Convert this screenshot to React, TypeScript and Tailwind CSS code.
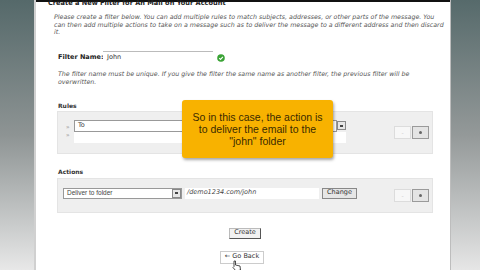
import React from "react";

const SmallButtons = () => (
  <div className="flex gap-[1px]">
    <div className="w-[17px] h-[13px] border border-[#dcdcdc] bg-[#f7f7f7] flex items-center justify-center text-[6px] text-[#ccc]">
      -
    </div>
    <div className="w-[17px] h-[13px] border border-[#9a9a9a] bg-[#e4e4e4] flex items-center justify-center">
      <span className="w-[3px] h-[3px] bg-[#666] rounded-full" />
    </div>
  </div>
);

const DropBtn = () => (
  <div className="w-[9px] h-[9px] border border-[#888] bg-[#e6e6e6] flex items-center justify-center">
    <span className="w-[3px] h-[2px] bg-[#444]" />
  </div>
);

export default function App() {
  return (
    <div
      className="w-[480px] h-[270px] overflow-hidden flex bg-white text-[#333]"
      style={{ fontFamily: "'DejaVu Sans', Verdana, sans-serif" }}
    >
      {/* left sidebar */}
      <div className="w-[34px] h-full bg-gradient-to-b from-[#55696a] via-[#8e9494] to-[#e8e8e8]" />
      <div className="w-[2px] h-full bg-[#d0d0d0]" />

      {/* content */}
      <div className="relative flex-1 h-full flex flex-col">
        <div className="h-[2px] bg-[#111]" />
        <div className="-mt-[3px] pl-[12px] text-[6.6px] font-bold text-[#222] leading-[9px] whitespace-nowrap">
          Create a New Filter for An Mail on Your Account
        </div>
        <div className="mt-[5px] pl-[18px] pr-[4px] text-[6.3px] italic text-[#555] leading-[7.5px]">
          <p className="whitespace-nowrap">
            Please create a filter below. You can add multiple rules to match subjects, addresses, or other parts of the message. You
          </p>
          <p className="whitespace-nowrap">
            can then add multiple actions to take on a message such as to deliver the message to a different address and then discard
          </p>
          <p>it.</p>
        </div>

        {/* filter name */}
        <div className="mt-[15px] pl-[22px] flex items-center h-[14px]">
          <span className="text-[6.5px] font-bold text-[#222] w-[45px] whitespace-nowrap">Filter Name:</span>
          <div className="w-[110px] h-[14px] border-t border-[#bbb] bg-white flex items-center pl-[4px] text-[6.5px] text-[#333]">
            John
          </div>
          <svg width="8" height="8" viewBox="0 0 8 8" className="ml-[4px]">
            <circle cx="4" cy="4" r="3.8" fill="#3aa335" />
            <path d="M2.2 4.1 L3.5 5.4 L5.9 2.8" stroke="#fff" strokeWidth="1.1" fill="none" />
          </svg>
        </div>
        <div className="mt-[5px] pl-[22px] text-[6.3px] italic text-[#555] leading-[8px]">
          <p className="whitespace-nowrap">
            The filter name must be unique. If you give the filter the same name as another filter, the previous filter will be
          </p>
          <p>overwritten.</p>
        </div>

        {/* rules */}
        <div className="mt-[16px] pl-[22px] text-[6px] font-bold text-[#333] leading-[8px]">Rules</div>
        <div className="ml-[21px] mr-[17px] mt-[1px] h-[43px] bg-[#efefef] border border-[#e4e4e4] flex items-start pt-[8px] pl-[8px] pr-[3px]">
          <div className="flex flex-col text-[6px] text-[#888] leading-[8px] pt-[3px] w-[8px]">
            <span>»</span>
            <span>»</span>
          </div>
          <div className="w-[272px] flex flex-col">
            <div className="flex items-center">
              <div className="flex-1 h-[12px] border border-[#999] bg-white text-[6.5px] pl-[3px] flex items-center text-[#444]">
                To
              </div>
              <DropBtn />
            </div>
            <div className="h-[11px] bg-white" />
          </div>
          <div className="flex-1" />
          <div className="mt-[6px]">
            <SmallButtons />
          </div>
        </div>

        {/* actions */}
        <div className="mt-[14px] pl-[22px] text-[6px] font-bold text-[#333] leading-[8px]">Actions</div>
        <div className="ml-[21px] mr-[17px] mt-[2px] h-[35px] bg-[#efefef] border border-[#e4e4e4] flex items-start pt-[9px] pl-[5px] pr-[3px]">
          <div className="w-[119px] h-[11px] border border-[#999] bg-white flex items-center text-[6.5px] text-[#444] pl-[3px]">
            <span className="flex-1" style={{ fontFamily: "'Liberation Sans', Arial, sans-serif" }}>Deliver to folder</span>
            <DropBtn />
          </div>
          <div className="ml-[3px] w-[134px] h-[11px] bg-white flex items-center text-[6.5px] text-[#444] pl-[2px] italic">
            /demo1234.com/john
          </div>
          <div className="ml-[3px] h-[11px] px-[4px] border border-[#888] bg-[#e6e6e6] flex items-center text-[6.5px] text-[#333]">
            Change
          </div>
          <div className="flex-1" />
          <div className="mt-[1px]">
            <SmallButtons />
          </div>
        </div>

        {/* buttons */}
        <div className="mt-[15px] flex justify-center pl-[4px]">
          <div className="h-[11px] px-[4px] border border-[#bbb] border-b-[#555] border-r-[#555] bg-[#f2f2f2] flex items-center text-[6.5px] text-[#333]">
            Create
          </div>
        </div>
        <div className="mt-[12px] flex justify-center -ml-[2px]">
          <div className="h-[13px] px-[4px] border border-[#ccc] bg-white flex items-center text-[6.5px] text-[#333]">
            ← Go Back
          </div>
        </div>

        {/* cursor */}
        <svg width="10" height="12" viewBox="0 0 10 12" className="absolute left-[196px] top-[260px]">
          <path d="M2 1 L3.5 1 L3.5 5 L8 6 L8.5 10 L4 11 L1 7.5 L2 6.5 Z" fill="#fff" stroke="#222" strokeWidth="0.8" />
        </svg>

        {/* tooltip */}
        <div
          className="absolute left-[146px] top-[100px] w-[151px] h-[58px] rounded-[3px] bg-[#f8b200] shadow-[1px_2px_3px_rgba(0,0,0,0.35)] flex items-center justify-center text-center text-[10.5px] leading-[12px] text-[#3a2a00]"
          style={{ fontFamily: "'Liberation Sans', Arial, sans-serif" }}
        >
          <p>
            So in this case, the action is
            <br />
            to deliver the email to the
            <br />
            "john" folder
          </p>
        </div>
      </div>

      {/* right sidebar */}
      <div className="w-[1px] h-full bg-[#bdbdbd]" />
      <div className="w-[29px] h-full bg-gradient-to-b from-[#566a6b] via-[#949999] to-[#e6e6e6]" />
    </div>
  );
}
